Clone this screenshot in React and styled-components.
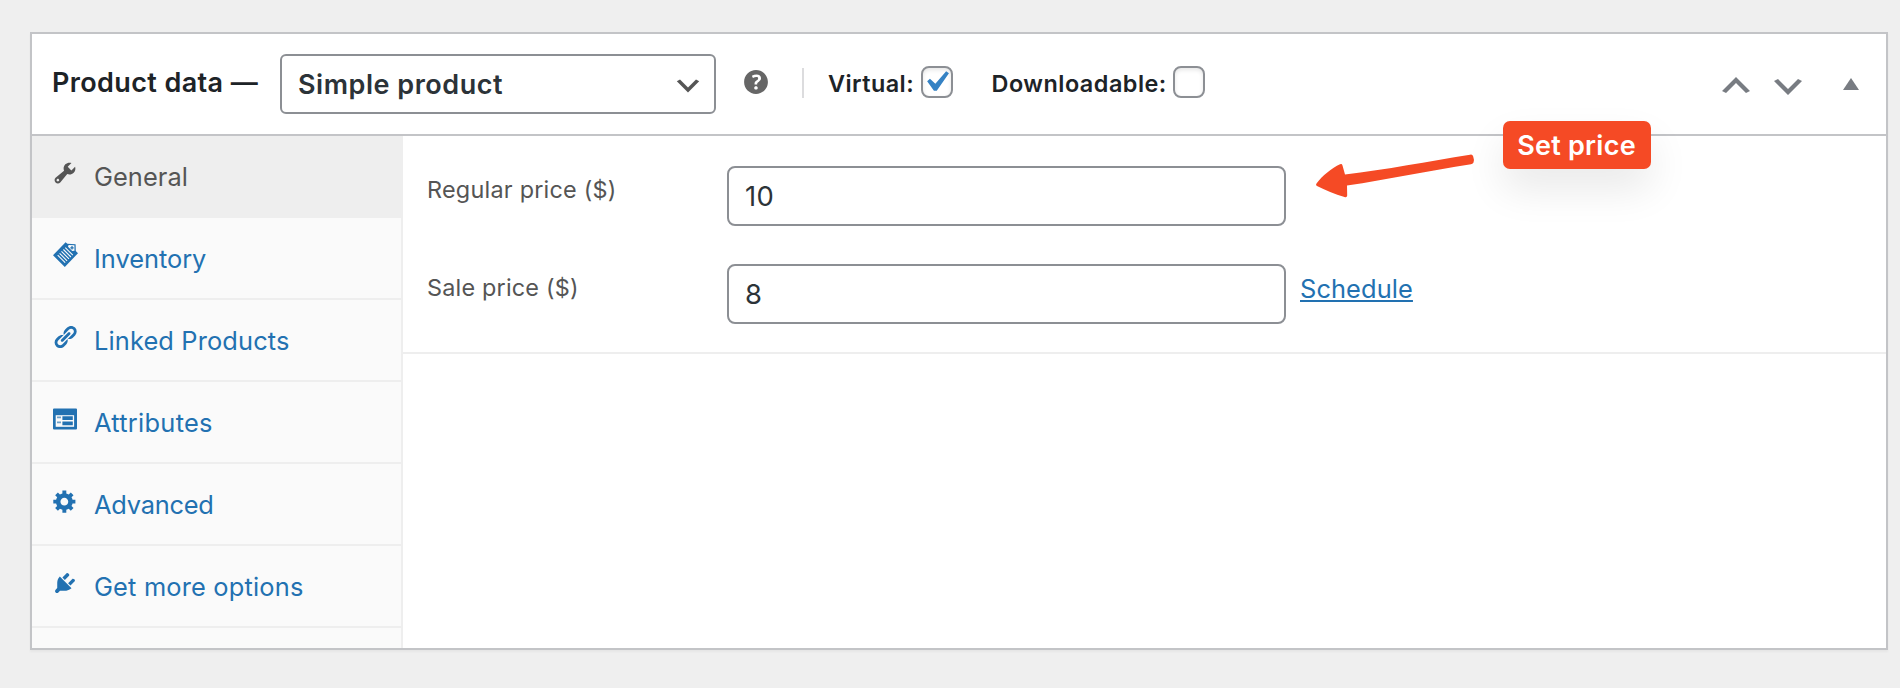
import React from 'react';
import styled, { createGlobalStyle } from 'styled-components';

const GlobalStyle = createGlobalStyle`
  *, *::before, *::after { box-sizing: border-box; }
  body {
    margin: 0;
    background: #efefef;
    font-family: Inter, "Liberation Sans", sans-serif;
    color: #1d2327;
  }
`;

const Page = styled.main`
  position: relative;
  height: 688px;
  padding: 32px 12px 38px 30px;
`;

const Panel = styled.section`
  display: flex;
  flex-direction: column;
  height: 618px;
  background: #fff;
  border: 2px solid #c3c4c7;
  box-shadow: 0 2px 2px rgba(0, 0, 0, 0.04);
`;

const Header = styled.header`
  display: flex;
  align-items: center;
  height: 102px;
  padding: 0 27px 0 20px;
  border-bottom: 2px solid #c3c4c7;
`;

const Title = styled.h2`
  margin: 0 0 2px;
  width: 228px;
  font-size: 27px;
  font-weight: 600;
  line-height: 40px;
  letter-spacing: 0.38px;
  white-space: nowrap;
`;

const Select = styled.div`
  display: flex;
  align-items: center;
  justify-content: space-between;
  width: 436px;
  height: 60px;
  padding: 0 10px 0 16px;
  border: 2px solid #8c8f94;
  border-radius: 6px;
  font-size: 27px;
  font-weight: 600;
  letter-spacing: 0.53px;
  color: #2c3338;

  svg { margin-top: 4px; color: #555; }
`;

const HelpTip = styled.span`
  display: flex;
  margin: 0 29px 4px 23px;
  color: #666;
`;

const TypeOptions = styled.div`
  display: flex;
  align-items: center;
`;

const Divider = styled.span`
  width: 2px;
  height: 30px;
  margin: 0 24px 2px 0;
  background: #dcdcde;
`;

const CheckLabel = styled.label`
  display: flex;
  align-items: center;
  gap: ${(p) => p.$gap}px;
  margin-right: 39px;
  font-size: 23.4px;
  font-weight: 600;
  line-height: 34px;
  letter-spacing: ${(p) => p.$spacing}px;
`;

const CheckBox = styled.span`
  display: flex;
  align-items: center;
  justify-content: center;
  width: 32px;
  height: 32px;
  margin-bottom: 4px;
  border: 2px solid #8c8f94;
  border-radius: 8px;
  background: #fff;
  box-shadow: inset 0 2px 4px rgba(0, 0, 0, 0.1);

  svg { flex: none; margin-right: 2px; }
`;

const Handles = styled.div`
  display: flex;
  align-items: center;
  margin-left: auto;
  color: #787c82;
`;

const Handle = styled.span`
  display: flex;
  margin-right: ${(p) => p.$after || 0}px;
  padding-top: ${(p) => p.$drop || 0}px;
`;

const Body = styled.div`
  display: flex;
  flex: 1;
  min-height: 0;
`;

const Tabs = styled.ul`
  width: 371px;
  margin: 0;
  padding: 0;
  list-style: none;
  background: #fafafa;
  border-right: 2px solid #eee;
`;

const Tab = styled.li`
  display: flex;
  align-items: center;
  gap: 16px;
  height: 82px;
  padding: 0 20px;
  border-bottom: 2px solid #eee;
  background: ${(p) => (p.$active ? '#eee' : 'transparent')};
  color: ${(p) => (p.$active ? '#555' : '#2271b1')};
  font-size: 25.4px;
  line-height: 30px;
  letter-spacing: ${(p) => p.$spacing}px;

  svg { flex: none; margin-bottom: 6px; }
`;

const TabLabel = styled.span`
  padding-top: 2px;
`;

const Content = styled.div`
  flex: 1;
`;

const FieldGroup = styled.div`
  display: flex;
  flex-direction: column;
  gap: 38px;
  height: 218px;
  padding: 30px 24px 0;
  border-bottom: 2px solid #eee;
`;

const Field = styled.div`
  display: flex;
  align-items: flex-start;
  height: 60px;
`;

const FieldLabel = styled.label`
  width: 300px;
  font-size: 23.4px;
  line-height: 48px;
  letter-spacing: ${(p) => p.$spacing}px;
  color: #555;
`;

const TextInput = styled.input`
  width: 559px;
  height: 60px;
  padding: 0 16px;
  border: 2px solid #8c8f94;
  border-radius: 8px;
  outline: 0;
  background: #fff;
  font: 27.4px Inter, "Liberation Sans", sans-serif;
  letter-spacing: 0.4px;
  color: #2c3338;
`;

const ScheduleLink = styled.a`
  margin-left: 14px;
  font-size: 25.4px;
  line-height: 50px;
  letter-spacing: 0.1px;
  color: #2271b1;
  text-decoration: underline;
  text-decoration-thickness: 2px;
  text-underline-offset: 2px;
  text-decoration-skip-ink: none;
`;

const Callout = styled.div`
  position: absolute;
  left: 1503px;
  top: 121px;
  width: 148px;
  height: 48px;
  padding-right: 1px;
  border-radius: 7px;
  background: #f54a25;
  color: #fff;
  font-size: 27px;
  font-weight: 600;
  line-height: 50px;
  letter-spacing: 0.25px;
  text-align: center;
  box-shadow: 0 20px 40px rgba(0, 0, 0, 0.09);
`;

const CalloutArrow = styled.svg`
  position: absolute;
  left: 1310px;
  top: 148px;
`;

const ICONS = {
  wrench:
    'M16.68 9.77c-1.34 1.34-3.3 1.67-4.95.99l-5.41 6.52c-.99.99-2.59.99-3.58 0s-.99-2.59 0-3.57l6.52-5.42c-.68-1.65-.35-3.61.99-4.95 1.28-1.28 3.12-1.62 4.72-1.06l-2.89 2.89 2.82 2.82 2.86-2.87c.53 1.58.18 3.39-1.08 4.65zM3.81 16.21c.4.39 1.04.39 1.43 0 .4-.4.4-1.04 0-1.43-.39-.4-1.03-.4-1.43 0-.39.39-.39 1.03 0 1.43z',
  link:
    'M17.74 2.76c1.68 1.69 1.68 4.41 0 6.1l-1.53 1.52c-1.12 1.12-2.7 1.47-4.14 1.09l2.62-2.61.76-.77.76-.76c.84-.84.84-2.2 0-3.04-.84-.85-2.2-.85-3.04 0l-.77.76-3.38 3.38c-.37-1.44-.02-3.02 1.1-4.14l1.52-1.53c1.69-1.68 4.42-1.68 6.1 0zM8.59 13.43l5.34-5.34c.42-.42.42-1.1 0-1.52-.44-.43-1.13-.39-1.53 0l-5.33 5.34c-.42.42-.42 1.1 0 1.52.44.43 1.13.39 1.52 0zm-.76 2.29l4.14-4.15c.38 1.44.03 3.02-1.09 4.14l-1.52 1.53c-1.69 1.68-4.41 1.68-6.1 0-1.68-1.68-1.68-4.42 0-6.1l1.53-1.52c1.12-1.12 2.7-1.47 4.14-1.1l-4.14 4.15c-.85.84-.85 2.2 0 3.05.84.84 2.2.84 3.04 0z',
  gear:
    'M18 12h-2.18c-.17.7-.44 1.35-.81 1.93l1.54 1.54-2.1 2.1-1.54-1.54c-.58.36-1.23.63-1.91.79V19H8v-2.18c-.68-.16-1.33-.43-1.91-.79l-1.54 1.54-2.12-2.12 1.54-1.54c-.36-.58-.63-1.23-.79-1.91H1V9.03h2.17c.16-.7.44-1.35.8-1.94L2.43 5.55l2.1-2.1 1.54 1.54c.58-.37 1.24-.64 1.93-.81V2h3v2.18c.68.16 1.33.43 1.91.79l1.54-1.54 2.12 2.12-1.54 1.54c.36.59.64 1.24.8 1.94H18V12zm-8.5 1.5c1.66 0 3-1.34 3-3s-1.34-3-3-3-3 1.34-3 3 1.34 3 3 3z',
  plug:
    'M13.11 4.36L9.87 7.6 8 5.73l3.24-3.24c.35-.34 1.05-.2 1.56.32.52.51.66 1.21.31 1.55zm-8 1.77l.91-1.12 9.01 9.01-1.19.84c-.71.71-2.63 1.16-3.82 1.16H6.14L4.9 17.26c-.59.59-1.54.59-2.12 0-.59-.58-.59-1.53 0-2.12l1.24-1.24v-3.88c0-1.13.4-3.19 1.09-3.89zm7.26 3.97l3.24-3.24c.34-.35 1.04-.21 1.55.31.52.51.66 1.21.31 1.55l-3.24 3.25z',
  help:
    'M17 10c0-3.87-3.14-7-7-7-3.87 0-7 3.13-7 7s3.13 7 7 7c3.86 0 7-3.13 7-7zm-6.3 1.48H9.14v-.43c0-.38.08-.7.24-.98s.46-.57.88-.89c.41-.29.68-.53.81-.71.14-.18.2-.39.2-.62 0-.25-.09-.44-.28-.58-.19-.13-.45-.19-.79-.19-.58 0-1.25.19-2 .57l-.64-1.28c.87-.49 1.8-.74 2.77-.74.81 0 1.45.2 1.92.58.48.39.71.91.71 1.55 0 .43-.09.8-.29 1.11-.19.32-.57.67-1.11 1.06-.38.28-.61.49-.71.63-.1.15-.15.34-.15.57v.35zm-1.47 2.74c-.18-.17-.27-.42-.27-.73 0-.33.08-.58.26-.75s.43-.25.77-.25c.32 0 .57.09.75.26s.27.42.27.74c0 .3-.09.55-.27.72-.18.18-.43.27-.75.27-.33 0-.58-.09-.76-.26z',
  down: 'M5 6l5 5 5-5 2 1-7 7-7-7z',
  up: 'M15 14l-5-5-5 5-2-1 7-7 7 7z',
  check: 'M14.83 4.89l1.34.94-5.81 8.38H9.02L5.78 9.67l1.34-1.25 2.57 2.4z',
};

const Icon = ({ name, size = 26 }) => (
  <svg width={size} height={size} viewBox="0 0 20 20" fill="currentColor" fillRule="evenodd">
    <path d={ICONS[name]} />
  </svg>
);

const InventoryIcon = () => (
  <svg width="26" height="26" viewBox="0 0 26 26" fill="none">
    <path d="M13.6 0.2L15.4 1.7L23.6 2.2L23.8 9L26 11.2L12.8 25L1 13.3Z" fill="currentColor" />
    <path d="M16.6 2.9L22.4 3.3L22.5 8.8L20.2 8.9L16 4.8Z" fill="#fafafa" />
    <path d="M20 4.1V7.5M18.3 5.8H21.7" stroke="currentColor" strokeWidth="1.2" />
    <path
      d="M13.3 5.6L20.8 13.1M11.4 7.5L18.9 15M9.5 9.4L17 16.9M7.6 11.3L15.1 18.8M5.7 13.2L13.2 20.7"
      stroke="#fafafa"
      strokeWidth="1.1"
    />
  </svg>
);

const AttributesIcon = () => (
  <svg width="26" height="26" viewBox="0 0 26 26">
    <path d="M2 2.4H24a1 1 0 0 1 1 1V22.6a1 1 0 0 1-1 1H2a1 1 0 0 1-1-1V3.4a1 1 0 0 1 1-1Z" fill="currentColor" />
    <rect x="3.7" y="9.2" width="18.4" height="11.6" fill="#fafafa" />
    <path d="M5 10.4H9V12.2H5ZM5 15.4H9V17.2H5Z" fill="currentColor" opacity="0.65" />
    <path d="M10.4 10.3H20.8V14H10.4ZM10.4 15.4H20.8V19.2H10.4Z" fill="currentColor" />
  </svg>
);

const TABS = [
  { label: 'General', icon: <Icon name="wrench" />, spacing: 0.06, active: true },
  { label: 'Inventory', icon: <InventoryIcon />, spacing: -0.02 },
  { label: 'Linked Products', icon: <Icon name="link" />, spacing: 0.14 },
  { label: 'Attributes', icon: <AttributesIcon />, spacing: 0.28 },
  { label: 'Advanced', icon: <Icon name="gear" />, spacing: -0.22 },
  { label: 'Get more options', icon: <Icon name="plug" />, spacing: 0.18 },
];

export default function App() {
  return (
    <>
      <GlobalStyle />
      <Page>
        <Panel>
          <Header>
            <Title>Product data —</Title>
            <Select>
              Simple product
              <Icon name="down" size={32} />
            </Select>
            <HelpTip>
              <Icon name="help" size={34} />
            </HelpTip>
            <TypeOptions>
              <Divider />
              <CheckLabel $gap={6.5} $spacing={0.45}>
                Virtual:
                <CheckBox>
                  <svg width="42" height="42" viewBox="0 0 20 20" fill="#3582c4">
                    <path d={ICONS.check} />
                  </svg>
                </CheckBox>
              </CheckLabel>
              <CheckLabel $gap={6} $spacing={0.5}>
                Downloadable:
                <CheckBox />
              </CheckLabel>
            </TypeOptions>
            <Handles>
              <Handle $after={12} $drop={2}>
                <Icon name="up" size={40} />
              </Handle>
              <Handle $after={35} $drop={5}>
                <Icon name="down" size={40} />
              </Handle>
              <Handle>
                <svg width="16" height="12" viewBox="0 0 16 12" fill="currentColor">
                  <path d="M8 0L16 12H0Z" />
                </svg>
              </Handle>
            </Handles>
          </Header>
          <Body>
            <Tabs>
              {TABS.map((tab) => (
                <Tab key={tab.label} $active={tab.active} $spacing={tab.spacing}>
                  {tab.icon}
                  <TabLabel>{tab.label}</TabLabel>
                </Tab>
              ))}
            </Tabs>
            <Content>
              <FieldGroup>
                <Field>
                  <FieldLabel $spacing={0.24}>Regular price ($)</FieldLabel>
                  <TextInput defaultValue="10" />
                </Field>
                <Field>
                  <FieldLabel $spacing={0.2}>Sale price ($)</FieldLabel>
                  <TextInput defaultValue="8" />
                  <ScheduleLink>Schedule</ScheduleLink>
                </Field>
              </FieldGroup>
            </Content>
          </Body>
        </Panel>
        <CalloutArrow width="170" height="56" viewBox="0 0 170 56" fill="#f54a25">
          <path d="M6.5 35.5C12 28 22 20 30 16.3Q32 15.5 32.5 17.5L35 26.5C76 21.5 118 13.5 160 6.7Q162.500 6 163.2 8.5Q164.5 12 163.5 14.5Q163.2 15.8 161 16.2C119 22.5 78 31.5 37 37.5L37.2 47.5Q37 49.8 34.5 49C25 46.5 15 42 7 38Q5.2 37 6.5 35.5Z" />
        </CalloutArrow>
        <Callout>Set price</Callout>
      </Page>
    </>
  );
}
